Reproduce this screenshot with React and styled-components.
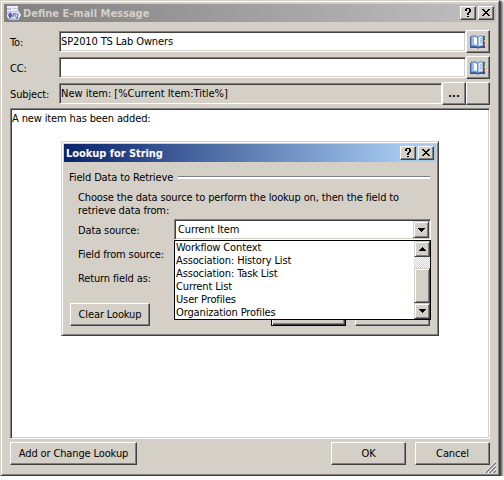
import styled, { createGlobalStyle, css } from 'styled-components';

const GlobalStyle = createGlobalStyle`
    * {
        box-sizing: border-box;
    }

    body {
        margin: 0;
        background: white;
        overflow: hidden;
        font: 11px/13px "DejaVu Sans Condensed", "DejaVu Sans", sans-serif;
        font-stretch: condensed;
        letter-spacing: -0.13px;
        color: black;
    }
`;

const raised = css`
    border: 1px solid;
    border-color: #fff #404040 #404040 #fff;
    box-shadow: inset -1px -1px #808080;
    background: #d4d0c8;
`;

// thin outer edge with the highlight one pixel inside
const framed = css`
    border: 1px solid;
    border-color: #d4d0c8 #404040 #404040 #d4d0c8;
    box-shadow: inset 1px 1px #fff, inset -1px -1px #808080;
    background: #d4d0c8;
`;

const sunken = css`
    border: 1px solid;
    border-color: #808080 #fff #fff #808080;
    box-shadow: inset 1px 1px #404040, inset -1px -1px #d4d0c8;
`;

const Window = styled.div`
    ${framed}
    position: relative;
    width: 500px;
    height: 476px;
    padding: 3px;
    box-shadow: inset 1px 1px #fff, inset -1px -1px #808080, 1px 1px #484848, 2px 2px 2px 1px #777;
`;

const Dialog = styled.div`
    ${framed}
    position: absolute;
    left: 61px;
    top: 141px;
    width: 378px;
    height: 195px;
    padding: 2px;
`;

const TitleBar = styled.div`
    display: flex;
    align-items: center;
    height: 18px;
    padding: 0 2px;
    gap: 2px;
    color: ${(props) => (props.$active ? 'white' : '#d4d0c8')};
    background: ${(props) => (props.$active
        ? 'linear-gradient(90deg, #0a246a, #a6caf0 92%)'
        : 'linear-gradient(90deg, #808080, #c0c0c0)')};
`;

const Title = styled.span`
    flex: 1;
    font-weight: bold;
    white-space: nowrap;
    letter-spacing: ${(props) => props.$track || '0'};
`;

const CaptionButton = styled.button`
    ${raised}
    width: 16px;
    height: 14px;
    padding: 0;
    display: flex;
`;

const Form = styled.div`
    padding: 8px 6px 0 6px;
`;

const FieldRow = styled.div`
    display: flex;
    height: 23px;
    margin-bottom: 3px;
`;

const FieldLabel = styled.label`
    width: 49px;
    padding-top: 6px;
`;

const Field = styled.div`
    ${sunken}
    flex: 1;
    height: 21px;
    margin-top: 1px;
    padding: 3px 1px;
    background: ${(props) => (props.$disabled ? '#d4d0c8' : 'white')};
    letter-spacing: ${(props) => props.$track || 'inherit'};
`;

const ToolButton = styled.button`
    ${raised}
    width: 24px;
    height: 23px;
    padding: 0;
    display: flex;
    align-items: center;
    justify-content: center;
    font: inherit;
    font-weight: ${(props) => (props.$bold ? 'bold' : 'normal')};
    color: black;
`;

const MessageBody = styled.div`
    ${sunken}
    height: 331px;
    padding: 3px 1px;
    background: white;
`;

const Footer = styled.div`
    display: flex;
    gap: 9px;
    margin-top: 3px;
`;

const PushButton = styled.button`
    ${raised}
    width: ${(props) => props.$width || 75}px;
    height: 23px;
    padding: 0;
    font: inherit;
    letter-spacing: inherit;
    color: black;
    white-space: nowrap;
    ${(props) => props.$default && css`
        border-color: black;
        box-shadow: inset 1px 1px #fff, inset -1px -1px #404040, inset -2px -2px #808080;
    `}
    ${(props) => props.$push && css`
        margin-left: auto;
    `}
`;

const Grip = styled.svg`
    position: absolute;
    right: 3px;
    bottom: 2px;
`;

const GroupTitle = styled.div`
    display: flex;
    align-items: center;
    gap: 5px;
    height: 13px;
    margin: 9px 6px 0 5px;

    &::after {
        content: '';
        flex: 1;
        height: 2px;
        border-top: 1px solid #808080;
        background: white;
    }
`;

const Hint = styled.p`
    margin: 7px 0 2px 14px;
    white-space: nowrap;
`;

const LookupRow = styled.div`
    position: relative;
    display: flex;
    height: 24px;
    padding-left: 14px;
`;

const LookupLabel = styled.label`
    width: 96px;
    padding-top: 5px;
`;

const Select = styled.div`
    ${sunken}
    display: flex;
    justify-content: space-between;
    width: 257px;
    height: 21px;
    padding: 1px 1px 1px 3px;
    background: white;
    line-height: 17px;
`;

const ArrowButton = styled.button`
    ${framed}
    width: 16px;
    height: ${(props) => props.$height || 16}px;
    padding: 0;
    display: flex;
    align-items: center;
    justify-content: center;
`;

const DropDown = styled.div`
    position: absolute;
    left: 110px;
    top: 21px;
    z-index: 1;
    display: flex;
    width: 257px;
    height: 80px;
    background: white;
    border: 1px solid black;
`;

const Options = styled.ul`
    flex: 1;
    margin: 0;
    padding: 0 0 0 1px;
    list-style: none;
`;

const ScrollBar = styled.div`
    display: flex;
    flex-direction: column;
    width: 16px;
    background: repeating-conic-gradient(#fff 0 25%, #d4d0c8 0 50%) 0 0 / 2px 2px;
`;

const Thumb = styled.div`
    ${framed}
    height: 35px;
    margin-top: auto;
`;

const DialogFooter = styled.div`
    display: flex;
    gap: 9px;
    margin: 12px 6px 0;
`;

const options = [
    'Workflow Context',
    'Association: History List',
    'Association: Task List',
    'Current List',
    'User Profiles',
    'Organization Profiles',
];

function CaptionButtons() {
    return (
        <>
            <CaptionButton aria-label="Help">
                <svg width="14" height="12" shapeRendering="crispEdges">
                    <path d="M4 2h2v2H4zM5 1h4v1H5zM8 2h2v3H8zM7 5h2v1H7zM6 6h2v2H6zM6 9h2v1H6z"/>
                </svg>
            </CaptionButton>
            <CaptionButton aria-label="Close">
                <svg width="14" height="12" shapeRendering="crispEdges">
                    <path d="M3 2h2v1H3zM9 2h2v1H9zM4 3h2v1H4zM8 3h2v1H8zM5 4h4v1H5zM6 5h2v1H6zM5 6h4v1H5zM4 7h2v1H4zM8 7h2v1H8zM3 8h2v1H3zM9 8h2v1H9z"/>
                </svg>
            </CaptionButton>
        </>
    );
}

function MailIcon() {
    return (
        <svg width="15" height="15" viewBox="0 0 15 15">
            <path d="M1 0h11v4l3 5-3 5H4L1 11z" fill="#eef0fb"/>
            <path d="M1 2h4v2H1zM1 6l3-1-1 4-2-1z" fill="#b6bae8"/>
            <path d="M6 2l6 1M4 6l7-1 2 4" fill="none" stroke="#b9bddd"/>
            <path d="M2 9l3-3 1 4-2 3z" fill="#5555b8"/>
            <path d="M5 7l2 4 1-4 3 6M9 7l3 2-1 4" fill="none" stroke="#6262c2"/>
            <path d="M4 13h8" stroke="#8f93cf"/>
        </svg>
    );
}

function BookIcon() {
    return (
        <svg width="16" height="14" viewBox="0 0 16 14">
            <path d="M0 2h2v9h5l1 1 1-1h5v2H9l-1 1-1-1H0z" fill="#35599c"/>
            <path d="M13 1h2v12h-2z" fill="#34486c"/>
            <path d="M14 2h1v2h-1z" fill="#56ad55"/>
            <path d="M14 5h1v2h-1z" fill="#e9c43d"/>
            <path d="M14 8h1v3h-1z" fill="#dc5647"/>
            <path d="M1 1h5l2 1v10l-2-1H1z" fill="#9dbdec" stroke="#4a74b8" strokeWidth=".8"/>
            <path d="M8 2l2-1h3v10h-3l-2 1z" fill="#e8f1ff" stroke="#4a74b8" strokeWidth=".8"/>
            <path d="M4 2l3 1v7l-3-1z" fill="#fff"/>
            <path d="M7.5 2v10M10 4l2-1M10 6l2-1M10 8l2-1" stroke="#6b93d0" strokeWidth=".8"/>
        </svg>
    );
}

function Arrow({ up }) {
    return (
        <svg width="7" height="4" shapeRendering="crispEdges">
            <path d={up ? 'M3 0h1v1h1v1h1v1h1v1H0V3h1V2h1V1h1z' : 'M0 0h7v1H6v1H5v1H4v1H3V3H2V2H1V1H0z'}/>
        </svg>
    );
}

function LookupDialog() {
    return (
        <Dialog>
            <TitleBar $active>
                <Title $track="-0.05px">Lookup for String</Title>
                <CaptionButtons/>
            </TitleBar>
            <GroupTitle>Field Data to Retrieve</GroupTitle>
            <Hint>
                Choose the data source to perform the lookup on, then the field to<br/>
                retrieve data from:
            </Hint>
            <LookupRow>
                <LookupLabel>Data source:</LookupLabel>
                <Select>
                    Current Item
                    <ArrowButton $height={17} aria-label="Open"><Arrow/></ArrowButton>
                </Select>
                <DropDown>
                    <Options>
                        {options.map((option) => <li key={option}>{option}</li>)}
                    </Options>
                    <ScrollBar>
                        <ArrowButton aria-label="Scroll up"><Arrow up/></ArrowButton>
                        <Thumb/>
                        <ArrowButton aria-label="Scroll down"><Arrow/></ArrowButton>
                    </ScrollBar>
                </DropDown>
            </LookupRow>
            <LookupRow><LookupLabel>Field from source:</LookupLabel></LookupRow>
            <LookupRow><LookupLabel>Return field as:</LookupLabel></LookupRow>
            <DialogFooter>
                <PushButton $width={80}>Clear Lookup</PushButton>
                <PushButton $push $default aria-label="Accept"/>
                <PushButton aria-label="Dismiss"/>
            </DialogFooter>
        </Dialog>
    );
}

export default function App() {
    return (
        <>
            <GlobalStyle/>
            <Window>
                <TitleBar>
                    <MailIcon/>
                    <Title>Define E-mail Message</Title>
                    <CaptionButtons/>
                </TitleBar>
                <Form>
                    <FieldRow>
                        <FieldLabel>To:</FieldLabel>
                        <Field>SP2010 TS Lab Owners</Field>
                        <ToolButton aria-label="Pick recipients"><BookIcon/></ToolButton>
                    </FieldRow>
                    <FieldRow>
                        <FieldLabel>CC:</FieldLabel>
                        <Field/>
                        <ToolButton aria-label="Pick copies"><BookIcon/></ToolButton>
                    </FieldRow>
                    <FieldRow>
                        <FieldLabel>Subject:</FieldLabel>
                        <Field $disabled $track="-0.02px">New item: [%Current Item:Title%]</Field>
                        <ToolButton $bold>...</ToolButton>
                        <ToolButton aria-label="Lookup"/>
                    </FieldRow>
                    <MessageBody>A new item has been added:</MessageBody>
                    <Footer>
                        <PushButton $width={127}>Add or Change Lookup</PushButton>
                        <PushButton $push>OK</PushButton>
                        <PushButton>Cancel</PushButton>
                    </Footer>
                </Form>
                <Grip width="12" height="12">
                    <path d="M0 12L12 0M4 12l8-8M8 12l4-4" stroke="#fff"/>
                    <path d="M1.5 12L12 1.5M5.5 12L12 5.5M9.5 12L12 9.5" stroke="#808080" strokeWidth="1.5"/>
                </Grip>
            </Window>
            <LookupDialog/>
        </>
    );
}
